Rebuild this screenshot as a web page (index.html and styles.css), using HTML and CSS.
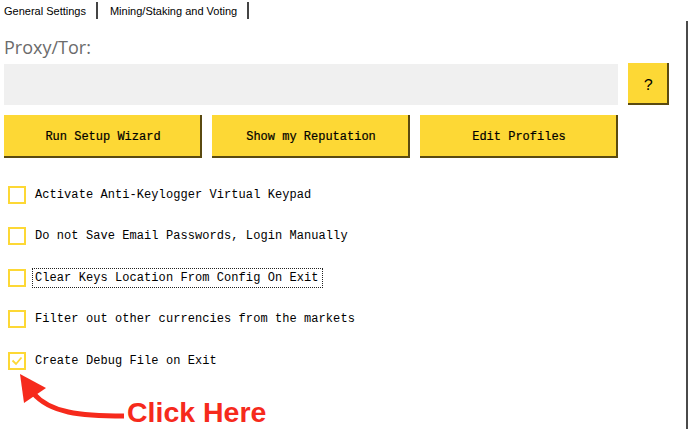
FILE: index.html
```html
<!DOCTYPE html>
<html>
<head>
<meta charset="utf-8">
<link rel="stylesheet" href="styles.css">
</head>
<body>
<div class="page">
  <div class="tabs">
    <span class="tab">General Settings</span>
    <span class="sep"></span>
    <span class="tab">Mining/Staking and Voting</span>
    <span class="sep"></span>
  </div>
  <div class="panel">
    <div class="title">Proxy/Tor:</div>
    <div class="proxy-row">
      <div class="proxy-input"></div>
      <button class="btn help">?</button>
    </div>
    <div class="btn-row">
      <button class="btn wide">Run Setup Wizard</button>
      <button class="btn wide">Show my Reputation</button>
      <button class="btn wide">Edit Profiles</button>
    </div>
    <div class="options">
      <div class="opt"><span class="box"></span><span class="label">Activate Anti-Keylogger Virtual Keypad</span></div>
      <div class="opt"><span class="box"></span><span class="label">Do not Save Email Passwords, Login Manually</span></div>
      <div class="opt"><span class="box"></span><span class="label focus">Clear Keys Location From Config On Exit</span></div>
      <div class="opt"><span class="box"></span><span class="label">Filter out other currencies from the markets</span></div>
      <div class="opt"><span class="box checked"><svg width="12" height="10" viewBox="0 0 12 10"><path d="M1.5 4.5 L5 8 L10.5 1.5" fill="none" stroke="#fdd835" stroke-width="1.8"/></svg></span><span class="label">Create Debug File on Exit</span></div>
    </div>
  </div>
  <svg class="arrow" width="140" height="60" viewBox="0 0 140 60">
    <path d="M124 45 C 80 45, 50 42, 33 22" fill="none" stroke="#f62a1c" stroke-width="5"/>
    <polygon points="20,3 46,17 24,32" fill="#f62a1c"/>
  </svg>
  <div class="click">Click Here</div>
</div>
</body>
</html>
```

FILE: styles.css
```css
* { box-sizing: border-box; }
html, body { margin: 0; padding: 0; background: #fff; }
.page {
  position: relative;
  width: 690px;
  height: 429px;
  overflow: hidden;
}
.tabs {
  display: flex;
  align-items: center;
  height: 21px;
  padding-left: 4px;
  font-family: "Liberation Sans", sans-serif;
  font-size: 11px;
  color: #000;
}
.sep {
  display: inline-block;
  width: 2px;
  height: 17px;
  background: #444;
  margin: 0 12px 0 10px;
}
.panel {
  margin-right: 2px;
  border-right: 2px solid #4a4a4a;
  height: 408px;
  padding: 16px 0 0 4px;
}
.title {
  font-family: "Open Sans", sans-serif;
  font-size: 18px;
  color: #6b6b6b;
  line-height: 20px;
  height: 27px;
}
.proxy-row {
  display: flex;
  gap: 10px;
  align-items: flex-start;
}
.proxy-input {
  width: 614px;
  height: 41px;
  background: #f0f0f0;
}
.btn {
  border: none;
  background: #fdd835;
  font-family: "Liberation Mono", monospace;
  font-size: 12px;
  color: #000;
  padding: 0;
  box-shadow: inset -2px -2px 0 #5a4a10;
  -webkit-text-stroke: 0.2px #000;
}
.help {
  width: 41px;
  height: 42px;
  margin-top: -1px;
  padding-top: 3px;
  font-size: 16px;
  -webkit-text-stroke: 0;
}
.btn-row {
  display: flex;
  gap: 10px;
  margin-top: 10px;
}
.wide {
  width: 198px;
  height: 43px;
  padding-top: 1px;
}
.options {
  padding-top: 14px;
  padding-left: 4px;
}
.opt {
  display: flex;
  align-items: center;
  height: 41.5px;
  padding-top: 4px;
}
.box {
  width: 18px;
  height: 18px;
  border: 2px solid #fdd835;
  display: flex;
  align-items: center;
  justify-content: center;
  margin-right: 6px;
  flex: none;
}
.label {
  font-family: "Liberation Mono", monospace;
  font-size: 12px;
  color: #000;
  padding: 2px 3px 2px 2px;
  border: 1px solid transparent;
  letter-spacing: 0.07px;
}
.focus { border: 1px dotted #222; }
.arrow {
  position: absolute;
  left: 0;
  top: 371px;
}
.click {
  position: absolute;
  left: 127px;
  top: 396px;
  font-family: "Liberation Sans", sans-serif;
  font-weight: bold;
  font-size: 28.5px;
  color: #f62a1c;
}
```
